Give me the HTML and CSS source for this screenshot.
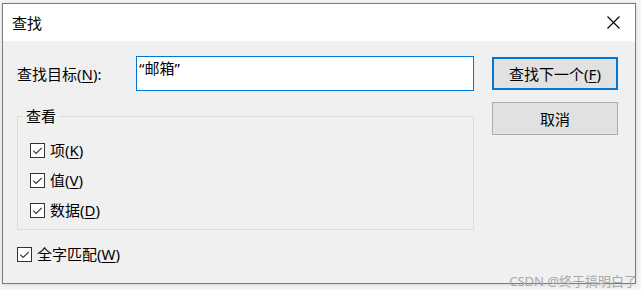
FILE: index.html
```html
<!DOCTYPE html>
<html lang="zh-CN">
<head>
<meta charset="utf-8">
<title>查找</title>
<link rel="stylesheet" href="styles.css">
</head>
<body>
<div class="window">
  <div class="titlebar">
    <span class="title">查找</span>
    <svg class="close" width="13" height="13" viewBox="0 0 13 13"><path d="M0.5 0.5 L12.5 12.5 M12.5 0.5 L0.5 12.5" stroke="#000" stroke-width="1.1" fill="none"/></svg>
  </div>
  <div class="content">
    <div class="main">
      <div class="find-row">
        <label class="find-label">查找目标(<u>N</u>):</label>
        <div class="textbox">“邮箱”</div>
      </div>
      <fieldset class="group">
        <legend class="legend">查看</legend>
        <div class="check-row"><span class="box"><svg width="13" height="13" viewBox="0 0 13 13"><path d="M2.2 6.6 L5.1 9.5 L10.8 3.8" stroke="#333" stroke-width="1.1" fill="none"/></svg></span><span class="check-text">项(<u>K</u>)</span></div>
        <div class="check-row"><span class="box"><svg width="13" height="13" viewBox="0 0 13 13"><path d="M2.2 6.6 L5.1 9.5 L10.8 3.8" stroke="#333" stroke-width="1.1" fill="none"/></svg></span><span class="check-text">值(<u>V</u>)</span></div>
        <div class="check-row"><span class="box"><svg width="13" height="13" viewBox="0 0 13 13"><path d="M2.2 6.6 L5.1 9.5 L10.8 3.8" stroke="#333" stroke-width="1.1" fill="none"/></svg></span><span class="check-text">数据(<u>D</u>)</span></div>
      </fieldset>
      <div class="check-row whole"><span class="box"><svg width="13" height="13" viewBox="0 0 13 13"><path d="M2.2 6.6 L5.1 9.5 L10.8 3.8" stroke="#333" stroke-width="1.1" fill="none"/></svg></span><span class="check-text">全字匹配(<u>W</u>)</span></div>
    </div>
    <div class="buttons">
      <div class="btn default">查找下一个(<u>F</u>)</div>
      <div class="btn">取消</div>
    </div>
  </div>
  <div class="watermark">CSDN @终于搞明白了</div>
</div>
</body>
</html>
```
FILE: styles.css
```css
html, body {
  margin: 0;
  padding: 0;
}
body {
  background: #f4f4f4;
  width: 641px;
  height: 290px;
  overflow: hidden;
  font-family: "Noto Sans", "Noto Sans CJK SC", sans-serif;
  font-size: 15px;
  color: #000;
}
u {
  text-decoration: underline;
  text-underline-offset: 2px;
  text-decoration-thickness: 1px;
}
.window {
  position: relative;
  box-sizing: border-box;
  width: 634px;
  height: 281px;
  margin: 3px 0 0 2px;
  border: 1px solid #7a7a7a;
  background: #f0f0f0;
  display: flex;
  flex-direction: column;
  box-shadow: 0 1px 4px rgba(0,0,0,0.12);
}
.titlebar {
  height: 37px;
  background: #fff;
  display: flex;
  align-items: center;
  justify-content: space-between;
  padding: 0 15px 0 9px;
}
.title {
  line-height: 20px;
}
.close {
  display: block;
}
.content {
  display: flex;
  gap: 18px;
  padding: 15px 0 0 14px;
}
.main {
  width: 457px;
  display: flex;
  flex-direction: column;
}
.find-row {
  display: flex;
  align-items: center;
  height: 35px;
}
.find-label {
  width: 119px;
  line-height: 20px;
  padding-top: 1px;
}
.textbox {
  box-sizing: border-box;
  flex: 1;
  height: 35px;
  border: 1px solid #0078d7;
  background: #fff;
  padding: 0 2px;
  line-height: 22px;
}
.group {
  margin: 15px 0 0 0;
  padding: 9px 0 2px 12px;
  border: 1px solid #dcdcdc;
  min-width: 0;
  height: 124px;
  box-sizing: border-box;
}
.legend {
  padding: 0 3px;
  margin-left: -7px;
  line-height: 20px;
}
.check-row {
  display: flex;
  align-items: center;
  height: 30px;
  gap: 5px;
}
.box {
  box-sizing: border-box;
  width: 15px;
  height: 15px;
  border: 1px solid #333;
  background: #fff;
  display: flex;
  align-items: center;
  justify-content: center;
}
.box svg {
  display: block;
}
.check-text {
  line-height: 20px;
}
.whole {
  margin-top: 9px;
}
.buttons {
  width: 126px;
  display: flex;
  flex-direction: column;
  gap: 12px;
  padding-top: 1px;
}
.btn {
  box-sizing: border-box;
  height: 33px;
  background: #e1e1e1;
  border: 1px solid #adadad;
  display: flex;
  align-items: center;
  justify-content: center;
  line-height: 20px;
}
.btn.default {
  border: 2px solid #0078d7;
}
.watermark {
  position: absolute;
  right: -2px;
  bottom: -5px;
  font-size: 13px;
  color: #a8a8a8;
  line-height: 14px;
}
```
